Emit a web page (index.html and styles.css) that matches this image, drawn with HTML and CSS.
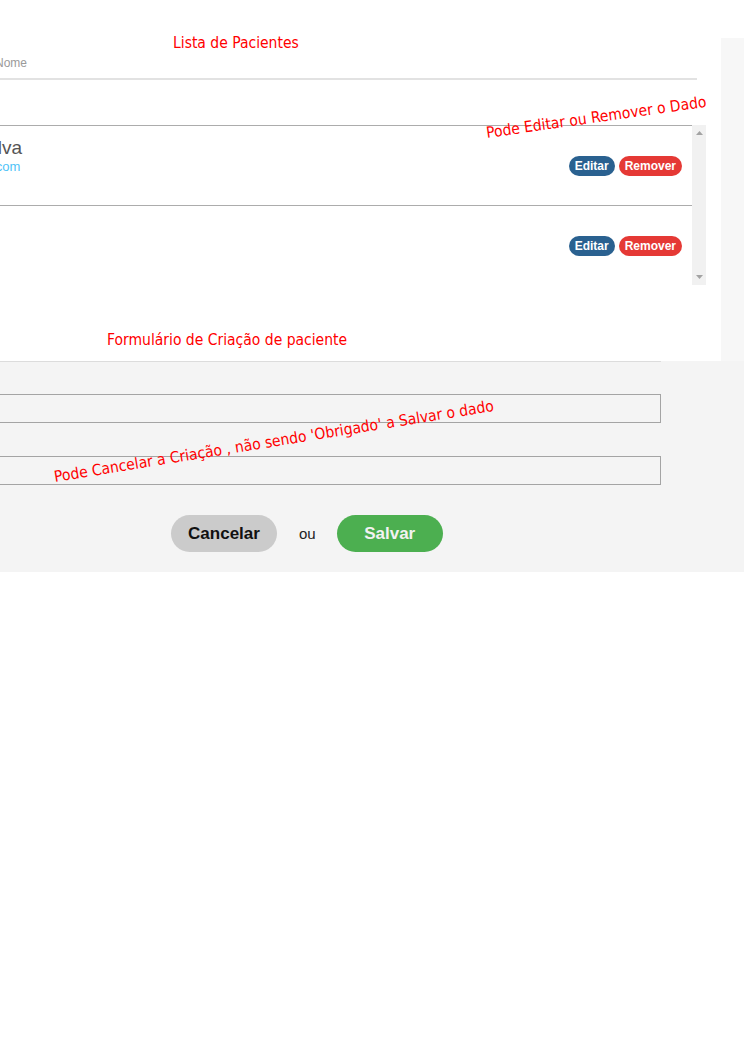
FILE: index.html
```html
<!DOCTYPE html>
<html lang="pt-BR">
<head>
<meta charset="utf-8">
<title>Pacientes</title>
<link rel="stylesheet" href="styles.css">
</head>
<body>
<div class="page">
  <div class="top">
    <main class="main">
      <h1 class="note list-title">Lista de Pacientes</h1>
      <div class="list-header"><span>Nome</span></div>
      <div class="list-box">
        <div class="rows">
          <div class="row">
            <div class="info">
              <div class="name">João da Silva</div>
              <div class="email">joao.silva@mail.com</div>
            </div>
            <div class="actions">
              <button class="btn-sm edit">Editar</button>
              <button class="btn-sm remove">Remover</button>
            </div>
          </div>
          <div class="row">
            <div class="info">
              <div class="name">Ana Lima</div>
              <div class="email">ana@email.com</div>
            </div>
            <div class="actions">
              <button class="btn-sm edit">Editar</button>
              <button class="btn-sm remove">Remover</button>
            </div>
          </div>
        </div>
        <div class="scrollbar" aria-hidden="true">
          <svg class="arrow" width="7" height="4" viewBox="0 0 7 4"><polygon points="0,4 7,4 3.5,0" fill="#a3a3a3"/></svg>
          <svg class="arrow" width="7" height="4" viewBox="0 0 7 4"><polygon points="0,0 7,0 3.5,4" fill="#a3a3a3"/></svg>
        </div>
      </div>
      <h2 class="note form-title">Formulário de Criação de paciente</h2>
    </main>
    <aside class="side"></aside>
  </div>
  <section class="form-area">
    <form class="form-inner">
      <div class="field">
        <label class="label">Nome</label>
        <input class="input" type="text">
      </div>
      <div class="field">
        <label class="label">Email</label>
        <input class="input" type="text">
      </div>
      <div class="form-actions">
        <button type="button" class="btn cancel">Cancelar</button>
        <span class="or">ou</span>
        <button type="button" class="btn save">Salvar</button>
      </div>
    </form>
  </section>
  <p class="note annot annot-1">Pode Editar ou Remover o Dado</p>
  <p class="note annot annot-2">Pode Cancelar a Criação , não sendo 'Obrigado' a Salvar o dado</p>
</div>
</body>
</html>
```
FILE: styles.css
```css
html, body {
  margin: 0;
  padding: 0;
  background: #ffffff;
}

body {
  font-family: "Liberation Sans", Arial, sans-serif;
}

.page {
  position: relative;
  overflow: hidden;
  min-height: 1052px;
}

.top {
  display: flex;
  height: 361px;
}

.main {
  flex: 1;
  min-width: 0;
  margin-left: -110px;
}

.side {
  width: 23px;
  flex-shrink: 0;
  margin-top: 38px;
  background: #f7f7f7;
}

.note {
  margin: 0;
  font-family: "DejaVu Sans Condensed", "DejaVu Sans", sans-serif;
  font-stretch: condensed;
  font-weight: normal;
  font-size: 15.5px;
  line-height: 18px;
  color: #ff0000;
  white-space: nowrap;
}

.list-title {
  padding: 34px 0 0 283px;
}

.list-header {
  margin-right: 24px;
  padding: 5px 0 8px 105px;
  border-bottom: 2px solid #e2e2e2;
  font-size: 12px;
  line-height: 13px;
  color: #9a9a9a;
}

.list-box {
  display: flex;
  margin: 45px 15px 0 0;
  height: 160px;
  overflow: hidden;
}

.rows {
  flex: 1;
  min-width: 0;
}

.scrollbar {
  width: 14px;
  flex-shrink: 0;
  display: flex;
  flex-direction: column;
  justify-content: space-between;
  align-items: center;
  box-sizing: border-box;
  padding: 6px 0 6px;
  background: #f1f1f1;
}

.arrow {
  display: block;
}

.row {
  display: flex;
  justify-content: space-between;
  box-sizing: border-box;
  height: 80px;
  padding: 0 10px 0 11px;
  border-top: 1px solid #acacac;
}

.info {
  padding-top: 11px;
  white-space: nowrap;
}

.name {
  padding-left: 7px;
  font-size: 19px;
  line-height: 22px;
  color: #555555;
}

.email {
  font-size: 13px;
  line-height: 16px;
  color: #4fc3f7;
}

.actions {
  display: flex;
  gap: 4px;
  align-self: center;
}

.btn-sm {
  height: 20px;
  padding: 0 6px;
  border: 0;
  border-radius: 10px;
  font-family: "Liberation Sans", Arial, sans-serif;
  font-weight: bold;
  font-size: 12px;
  color: #ffffff;
}

.edit {
  background: #2a6190;
}

.remove {
  background: #e53935;
}

.form-title {
  margin-top: 46px;
  padding-left: 217px;
}

.form-area {
  background: #f4f4f4;
  padding-bottom: 20px;
}

.form-inner {
  margin: 0 0 0 -110px;
  width: 771px;
  border-top: 1px solid #dcdcdc;
}

.label {
  display: block;
  height: 33px;
  line-height: 33px;
  padding-left: 10px;
  font-size: 13px;
  color: #333333;
}

.field:first-child .label {
  height: 32px;
  line-height: 32px;
}

.input {
  display: block;
  box-sizing: border-box;
  width: 100%;
  height: 29px;
  margin: 0;
  padding: 0 6px;
  border: 1px solid #a4a4a4;
  background: transparent;
}

.form-actions {
  display: flex;
  align-items: center;
  margin-top: 30px;
  padding-left: 281px;
}

.btn {
  width: 106px;
  height: 37px;
  border: 0;
  border-radius: 19px;
  font-family: "Liberation Sans", Arial, sans-serif;
  font-weight: bold;
  font-size: 17px;
}

.cancel {
  background: #cbcbcb;
  color: #111111;
}

.save {
  background: #4caf50;
  color: #f2f2f2;
}

.or {
  margin: 0 21px 0 22px;
  font-size: 15px;
  color: #222222;
}

.annot {
  position: absolute;
  transform-origin: 0 14px;
}

.annot-1 {
  left: 487px;
  top: 124px;
  transform: rotate(-8.1deg);
}

.annot-2 {
  left: 55px;
  top: 468px;
  transform: rotate(-9.2deg);
}
```
